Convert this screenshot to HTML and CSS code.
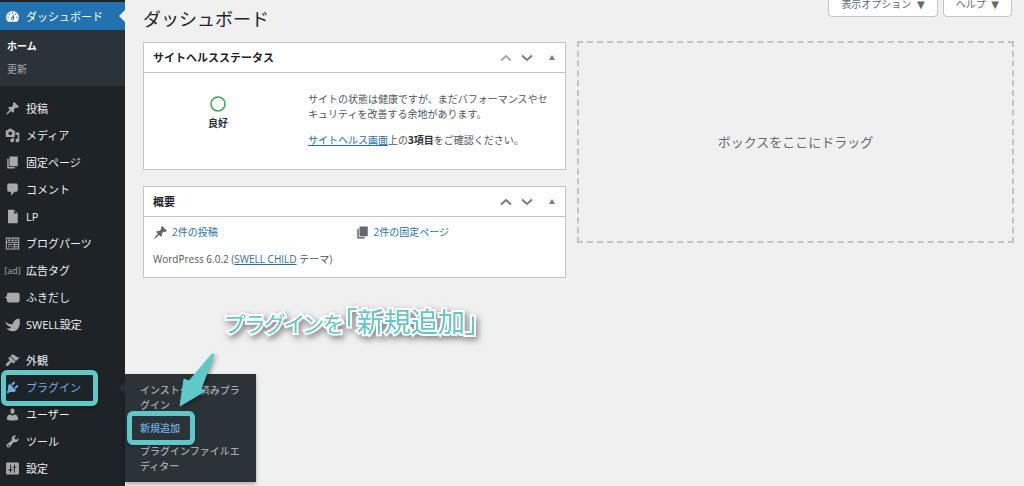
FILE: index.html
```
<!DOCTYPE html>
<html lang="ja">
<head>
<meta charset="utf-8">
<meta name="viewport" content="width=device-width, initial-scale=1">
<title>ダッシュボード</title>
<link rel="stylesheet" href="styles.css">
</head>
<body>
<svg class="defs" aria-hidden="true">
  <symbol id="i-pin" viewBox="0 0 20 20"><path d="M10.44 3.02l1.82-1.82 6.36 6.35-1.83 1.82c-1.05-.68-2.48-.57-3.41.36l-.75.75c-.92.93-1.04 2.35-.35 3.41l-1.83 1.82-2.41-2.41-2.8 2.79c-.42.42-3.38 2.71-3.8 2.29s1.86-3.39 2.28-3.81l2.79-2.79L4.1 9.36l1.83-1.82c1.05.69 2.48.57 3.4-.36l.75-.75c.93-.92 1.05-2.35.36-3.41z"/></symbol>
  <symbol id="i-page" viewBox="0 0 20 20"><path d="M6 15V2h11v13H6zm-1 1h8v2H3V5h2v11z"/></symbol>
  <symbol id="i-up" viewBox="0 0 12 8"><path d="M1 6.500L6 2l5 4.500" fill="none" stroke="currentColor" stroke-width="2"/></symbol>
  <symbol id="i-down" viewBox="0 0 12 8"><path d="M1 1.500L6 6l5-4.500" fill="none" stroke="currentColor" stroke-width="2"/></symbol>
  <symbol id="i-toggle" viewBox="0 0 6 6"><path d="M3 0l3 5H0z"/></symbol>
</svg>
<div class="layout">
  <nav class="sidebar" aria-label="メインメニュー">
    <a class="item current" href="#"><svg class="icon" viewBox="0 0 20 20"><path fill-rule="evenodd" d="M3.760 17h12.480A8.500 8.500 0 1 0 3.760 17zM10 4a1 1 0 1 1 0 2 1 1 0 0 1 0-2zM6 6a1 1 0 1 1 0 2 1 1 0 0 1 0-2zm8 0a1 1 0 1 1 0 2 1 1 0 0 1 0-2zm-5.370 5.550L12 7v6c0 1.100-.9 2-2 2s-2-.9-2-2c0-.57.24-1.080.63-1.450zM4 10a1 1 0 1 1 0 2 1 1 0 0 1 0-2zm12 0a1 1 0 1 1 0 2 1 1 0 0 1 0-2zm-5 3a1 1 0 1 0-2 0 1 1 0 0 0 2 0z"/></svg>ダッシュボード</a>
    <div class="submenu">
      <a class="active" href="#">ホーム</a>
      <a href="#">更新</a>
    </div>
    <div class="group">
      <a class="item" href="#"><svg class="icon"><use href="#i-pin"/></svg>投稿</a>
      <a class="item" href="#"><svg class="icon" viewBox="0 0 20 20"><path fill-rule="evenodd" d="M13 11V4c0-.55-.45-1-1-1h-1.670L9 1H5L3.670 3H2c-.55 0-1 .45-1 1v7c0 .55.45 1 1 1h10c.55 0 1-.45 1-1zM7 4.500a2.500 2.500 0 1 1 0 5 2.500 2.500 0 0 1 0-5zM14 6h5v10.500c0 1.380-1.120 2.500-2.500 2.500S14 17.880 14 16.500s1.120-2.500 2.500-2.500c.17 0 .34.02.5.05V9h-3V6zm-4 8.050V13h2v3.500c0 1.380-1.120 2.500-2.500 2.500S7 17.880 7 16.500 8.120 14 9.500 14c.17 0 .34.02.5.05z"/></svg>メディア</a>
      <a class="item" href="#"><svg class="icon"><use href="#i-page"/></svg>固定ページ</a>
      <a class="item" href="#"><svg class="icon" viewBox="0 0 20 20"><path d="M5 2h10c1.100 0 2 .9 2 2v7c0 1.100-.9 2-2 2h-2l-5 5v-5H5c-1.100 0-2-.9-2-2V4c0-1.100.9-2 2-2z"/></svg>コメント</a>
      <a class="item" href="#"><svg class="icon" viewBox="0 0 20 20"><path fill-rule="evenodd" d="M12 1l5 5v13H4V1h8zm0 5h4l-4-4v4z"/></svg>LP</a>
      <a class="item" href="#"><svg class="icon" viewBox="0 0 20 20"><path fill-rule="evenodd" d="M1 2h18v16H1zM2.500 3.500v4h15v-4zM2.500 9v7.500h9V9zM13 9v1.500h4.500V9zM13 12v1.500h4.500V12zM13 15v1.500h4.500V15z"/><path d="M4 4.500h3v2H4zM8.500 4.500h3v2h-3zM13 4.500h3v2h-3zM4 10.500h6V12H4zM4 13.500h2.500V15H4zM8 13.500h2V15H8z"/></svg>ブログパーツ</a>
      <a class="item" href="#"><span class="icon ad">[ad]</span>広告タグ</a>
      <a class="item" href="#"><svg class="icon" viewBox="0 0 20 20"><path d="M4.500 3.500H17a2.500 2.500 0 0 1 2.500 2.500v8a2.500 2.500 0 0 1-2.500 2.500H5A2.500 2.500 0 0 1 2.500 14v-2L0 10l2.500-2V6a2.500 2.500 0 0 1 2-2.500z"/></svg>ふきだし</a>
      <a class="item" href="#"><svg class="icon" viewBox="0 0 20 20"><path d="M0 5.500c3 3 6.500 4.500 10 4 1.500-4 4.500-7 9-7.500 2.500 8-1 17-9 17-3.500 0-6-1.500-7.500-4 2.500.5 4.500 0 6-1.500C4.500 12.500 1 10 0 5.500z"/></svg>SWELL設定</a>
    </div>
    <div class="group">
      <a class="item" href="#"><svg class="icon" viewBox="0 0 20 20"><path d="M14.480 11.060L7.410 3.990l1.500-1.500c.5-.56 2.300-.47 3.510.32 1.210.8 1.430 1.280 2.910 2.100 1.180.64 2.450 1.260 4.450.85zm-.71.71L6.700 4.700 4.930 6.470c-.39.39-.39 1.020 0 1.410l1.060 1.060c.39.39.39 1.030 0 1.420-.6.6-1.430 1.110-2.210 1.690-.35.26-.7.53-1.010.84C1.430 14.230.4 16.080 1.400 17.070c.99 1 2.840-.03 4.180-1.360.31-.31.58-.66.85-1.020.57-.78 1.080-1.610 1.690-2.210.39-.39 1.020-.39 1.410 0l1.060 1.060c.39.39 1.020.39 1.410 0z"/></svg>外観</a>
      <div class="parent">
        <a class="item hover" href="#"><svg class="icon" viewBox="0 0 20 20"><path d="M13.110 4.360L9.870 7.600 8 5.730l3.240-3.240c.35-.34 1.050-.2 1.560.32.52.51.66 1.210.31 1.550zm-8 1.770l.91-1.120 9.010 9.010-1.190.84c-.71.71-2.630 1.160-3.820 1.160H6.140L4.900 17.260c-.59.59-1.540.59-2.120 0-.59-.58-.59-1.530 0-2.120l1.240-1.240v-3.880c0-1.130.4-3.190 1.090-3.890zm7.260 3.970l3.240-3.240c.34-.35 1.040-.21 1.550.31.52.51.66 1.210.31 1.550l-3.240 3.250z"/></svg>プラグイン</a>
        <div class="flyout">
          <a href="#">インストール済みプラグイン</a>
          <a class="hover" href="#">新規追加<span class="marker marker-add"></span></a>
          <a href="#">プラグインファイルエディター</a>
        </div>
        <span class="marker marker-plugin"></span>
      </div>
      <a class="item" href="#"><svg class="icon" viewBox="0 0 20 20"><path d="M10 9.250c-2.270 0-2.730-3.440-2.730-3.440C7 4.020 7.820 2 9.970 2c2.160 0 2.980 2.020 2.710 3.810 0 0-.41 3.440-2.680 3.440zm0 2.570L12.720 10c2.390 0 4.520 2.330 4.520 4.530v2.490s-3.650 1.130-7.240 1.130c-3.650 0-7.240-1.130-7.240-1.130v-2.490c0-2.250 1.940-4.480 4.470-4.480z"/></svg>ユーザー</a>
      <a class="item" href="#"><svg class="icon" viewBox="0 0 20 20"><path d="M16.680 9.770c-1.340 1.340-3.300 1.670-4.950.99l-5.410 6.520c-.99.99-2.590.99-3.580 0s-.99-2.590 0-3.570l6.520-5.420c-.68-1.650-.35-3.610.99-4.950 1.280-1.280 3.120-1.620 4.720-1.060l-2.890 2.890 2.820 2.820 2.860-2.870c.53 1.580.18 3.390-1.080 4.650zM3.810 16.210c.4.39 1.040.39 1.430 0 .4-.4.4-1.040 0-1.430-.39-.4-1.030-.4-1.430 0-.39.39-.39 1.030 0 1.430z"/></svg>ツール</a>
      <a class="item" href="#"><svg class="icon" viewBox="0 0 20 20"><path fill-rule="evenodd" d="M18.500 17V3c0-.55-.45-1-1-1h-15c-.55 0-1 .45-1 1v14c0 .55.45 1 1 1h15c.55 0 1-.45 1-1zM8 11h2v1.500H8v3H6.800v-3h-2V11h2V4.500H8zM13.200 9v6.500H12V9h-2V7.500h2v-3h1.200v3h2V9z"/></svg>設定</a>
    </div>
  </nav>
  <main class="content">
    <header class="top">
      <h1>ダッシュボード</h1>
      <div class="tabs">
        <button type="button">表示オプション <span class="caret">▼</span></button>
        <button type="button">ヘルプ <span class="caret">▼</span></button>
      </div>
    </header>
    <div class="columns">
      <div class="column">
        <section class="panel">
          <div class="panel-head">
            <h2>サイトヘルスステータス</h2>
            <button class="muted" type="button" aria-label="上に移動"><svg class="chevron"><use href="#i-up"/></svg></button>
            <button type="button" aria-label="下に移動"><svg class="chevron"><use href="#i-down"/></svg></button>
            <button class="fold" type="button" aria-label="パネルを閉じる"><svg class="triangle"><use href="#i-toggle"/></svg></button>
          </div>
          <div class="health">
            <div class="status">
              <svg class="ring" viewBox="0 0 16 16"><circle cx="8" cy="8" r="7" fill="none" stroke="#2fa84f" stroke-width="1.500"/></svg>
              <strong>良好</strong>
            </div>
            <div class="advice">
              <p>サイトの状態は健康ですが、まだパフォーマンスやセキュリティを改善する余地があります。</p>
              <p><a href="#">サイトヘルス画面</a>上の<strong>3項目</strong>をご確認ください。</p>
            </div>
          </div>
        </section>
        <section class="panel">
          <div class="panel-head">
            <h2>概要</h2>
            <button type="button" aria-label="上に移動"><svg class="chevron"><use href="#i-up"/></svg></button>
            <button type="button" aria-label="下に移動"><svg class="chevron"><use href="#i-down"/></svg></button>
            <button class="fold" type="button" aria-label="パネルを閉じる"><svg class="triangle"><use href="#i-toggle"/></svg></button>
          </div>
          <div class="glance">
            <ul>
              <li><svg class="icon"><use href="#i-pin"/></svg><a href="#">2件の投稿</a></li>
              <li><svg class="icon"><use href="#i-page"/></svg><a href="#">2件の固定ページ</a></li>
            </ul>
            <p>WordPress 6.0.2 (<a href="#">SWELL CHILD</a> テーマ)</p>
          </div>
        </section>
      </div>
      <div class="dropzone">ボックスをここにドラッグ</div>
    </div>
  </main>
  <div class="callout"><span class="kana">プラグインを</span>「新規追加」</div>
  <svg class="arrow" viewBox="0 0 50 66" aria-hidden="true"><path d="M42 8L29 43l4 2L8 60l4-27 5 2L40 8z" stroke="#5fc8c8" stroke-linejoin="round"/></svg>
</div>
</body>
</html>
```
FILE: styles.css
```
* {
  box-sizing: border-box;
}

body {
  margin: 0;
  background: #f0f0f1;
  color: #50575e;
  font-family: "Open Sans", "Noto Sans CJK JP", sans-serif;
  font-size: 10px;
  line-height: 15px;
}

a {
  color: #2271b1;
}

h1,
h2,
p,
ul {
  margin: 0;
  padding: 0;
}

button {
  font: inherit;
  color: #646970;
}

strong {
  color: #2c3338;
}

.defs {
  display: none;
}

.layout {
  position: relative;
  display: flex;
  min-height: 100vh;
}

/* Sidebar */
.sidebar {
  flex: none;
  width: 125px;
  padding-top: 2px;
  background: #1d2327;
}

.item {
  position: relative;
  display: flex;
  align-items: center;
  gap: 6px;
  height: 27px;
  padding-left: 5px;
  color: #f0f0f1;
  font-size: 11px;
  text-decoration: none;
}

.icon {
  flex: none;
  width: 15px;
  height: 15px;
  fill: #a7aaad;
}

.ad {
  color: #a7aaad;
  font-size: 9px;
  display: flex;
  align-items: center;
  justify-content: center;
}

.current {
  height: 28px;
  background: #2271b1;
  color: #fff;
}

.current .icon {
  fill: #fff;
}

.current::after {
  content: "";
  position: absolute;
  right: 0;
  border: 6px solid transparent;
  border-left-width: 0;
  border-right-color: #f0f0f1;
}

.submenu {
  display: flex;
  flex-direction: column;
  gap: 8px;
  padding: 9px 7px;
  background: #2c3338;
}

.submenu a,
.flyout a {
  color: #a7aaad;
  text-decoration: none;
}

.submenu .active {
  color: #fff;
  font-weight: 700;
}

.group {
  margin-top: 9px;
}

.parent {
  position: relative;
}

.item.hover,
.flyout .hover {
  color: #72aee6;
}

.item.hover .icon {
  fill: #72aee6;
}

.item.hover::after {
  content: "";
  position: absolute;
  right: 0;
  border: 6px solid transparent;
  border-left-width: 0;
  border-right-color: #2c3338;
}

.flyout {
  position: absolute;
  top: 0;
  left: 100%;
  width: 131px;
  display: flex;
  flex-direction: column;
  gap: 8px;
  padding: 9px 12px 8px 15px;
  background: #2c3338;
  box-shadow: 0 2px 4px rgba(0, 0, 0, 0.3);
  font-weight: 500;
}

.flyout a {
  position: relative;
}

.marker {
  position: absolute;
  border: 5px solid #5fc8c8;
  border-radius: 6px;
  box-shadow: 0 1px 3px rgba(0, 0, 0, 0.3);
}

.marker-plugin {
  inset: -4px 27px -5px 1px;
}

.marker-add {
  top: -10px;
  bottom: -9px;
  left: -13px;
  width: 68px;
}

/* Content */
.content {
  flex: 1;
  min-width: 0;
  padding: 0 10px 0 18px;
}

.top {
  display: flex;
  align-items: flex-start;
  justify-content: space-between;
  height: 41px;
}

h1 {
  padding-top: 7px;
  color: #1d2327;
  font-size: 18px;
  font-weight: 400;
  line-height: 24px;
}

.tabs {
  display: flex;
  gap: 5px;
  padding-right: 2px;
}

.tabs button {
  height: 26px;
  margin-top: -9px;
  padding: 0 12px;
  border: 1px solid #c3c4c7;
  border-radius: 0 0 4px 4px;
  background: #fff;
}

.caret {
  margin-left: 3px;
  font-family: "DejaVu Sans", sans-serif;
  font-size: 10px;
}

.columns {
  display: grid;
  grid-template-columns: 423fr 437fr;
  gap: 11px;
  align-items: start;
}

.column {
  display: flex;
  flex-direction: column;
  gap: 16px;
  padding-top: 1px;
}

.panel {
  border: 1px solid #c3c4c7;
  background: #fff;
}

.panel-head {
  display: flex;
  align-items: center;
  height: 30px;
  padding: 0 6px 0 9px;
  border-bottom: 1px solid #c3c4c7;
}

h2 {
  flex: 1;
  color: #1d2327;
  font-size: 11px;
  font-weight: 700;
}

.panel-head button {
  display: flex;
  justify-content: center;
  width: 21px;
  padding: 0;
  border: 0;
  background: none;
  color: #787c82;
}

.panel-head .muted {
  color: #a7aaad;
}

.panel-head .fold {
  width: 15px;
  margin-left: 7px;
}

.chevron {
  width: 12px;
  height: 8px;
}

.triangle {
  width: 6px;
  height: 6px;
  fill: #787c82;
}

.health {
  display: grid;
  grid-template-columns: 148px 1fr;
  padding: 19px 9px 21px 0;
}

.status {
  display: flex;
  flex-direction: column;
  align-items: center;
  gap: 4px;
  padding-top: 4px;
}

.ring {
  width: 16px;
  height: 16px;
}

.advice {
  display: flex;
  flex-direction: column;
  gap: 11px;
  padding-left: 16px;
}

.glance {
  padding: 8px 9px 10px;
}

.glance ul {
  display: grid;
  grid-template-columns: 1fr 1fr;
  margin-bottom: 12px;
  list-style: none;
}

.glance li {
  display: flex;
  align-items: center;
  gap: 4px;
}

.glance li a {
  text-decoration: none;
}

.glance .icon {
  fill: #646970;
}

.dropzone {
  display: flex;
  align-items: center;
  justify-content: center;
  min-height: 202px;
  border: 2px dashed #c3c4c7;
  color: #646970;
  font-size: 13px;
}

/* Annotations laid over the screen */
.callout {
  position: absolute;
  top: 305px;
  left: 225px;
  color: #5fc8c8;
  font-size: 27px;
  line-height: 34px;
  white-space: nowrap;
  font-feature-settings: "palt";
  paint-order: stroke fill;
  -webkit-text-stroke: 4px #fff;
  filter: drop-shadow(2px 3px 3px rgba(0, 0, 0, 0.45));
}

.kana {
  font-size: 22px;
}

.arrow {
  position: absolute;
  top: 346px;
  left: 172px;
  width: 50px;
  height: 66px;
  fill: #5fc8c8;
  filter: drop-shadow(2px 2px 2px rgba(0, 0, 0, 0.35));
}
```
